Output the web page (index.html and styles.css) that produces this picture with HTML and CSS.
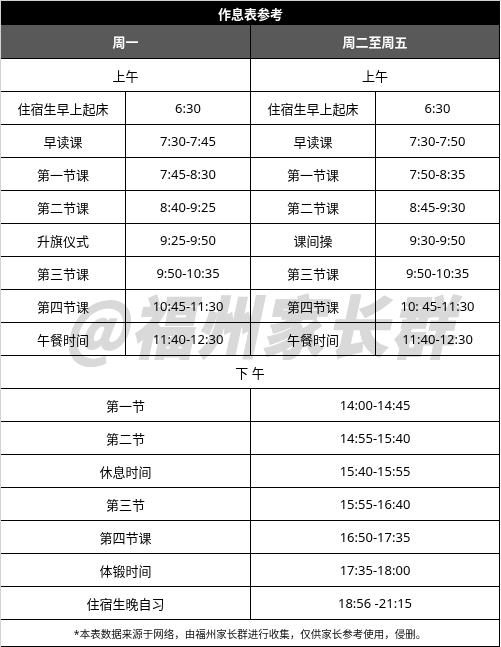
FILE: index.html
```html
<!DOCTYPE html>
<html lang="zh">
<head>
<meta charset="utf-8">
<link rel="stylesheet" href="styles.css">
</head>
<body>
<div class="frame">
  <div class="sheet">
    <div class="title">作息表参考</div>
    <div class="row head two">
      <div class="cell">周一</div>
      <div class="cell">周二至周五</div>
    </div>
    <div class="row two">
      <div class="cell">上午</div>
      <div class="cell">上午</div>
    </div>
    <div class="row four"><div class="cell">住宿生早上起床</div><div class="cell">6:30</div><div class="cell">住宿生早上起床</div><div class="cell">6:30</div></div>
    <div class="row four"><div class="cell">早读课</div><div class="cell">7:30-7:45</div><div class="cell">早读课</div><div class="cell">7:30-7:50</div></div>
    <div class="row four"><div class="cell">第一节课</div><div class="cell">7:45-8:30</div><div class="cell">第一节课</div><div class="cell">7:50-8:35</div></div>
    <div class="row four"><div class="cell">第二节课</div><div class="cell">8:40-9:25</div><div class="cell">第二节课</div><div class="cell">8:45-9:30</div></div>
    <div class="row four"><div class="cell">升旗仪式</div><div class="cell">9:25-9:50</div><div class="cell">课间操</div><div class="cell">9:30-9:50</div></div>
    <div class="row four"><div class="cell">第三节课</div><div class="cell">9:50-10:35</div><div class="cell">第三节课</div><div class="cell">9:50-10:35</div></div>
    <div class="row four"><div class="cell">第四节课</div><div class="cell">10:45-11:30</div><div class="cell">第四节课</div><div class="cell">10: 45-11:30</div></div>
    <div class="row four"><div class="cell">午餐时间</div><div class="cell">11:40-12:30</div><div class="cell">午餐时间</div><div class="cell">11:40-12:30</div></div>
    <div class="row one"><div class="cell">下 午</div></div>
    <div class="row two"><div class="cell">第一节</div><div class="cell">14:00-14:45</div></div>
    <div class="row two"><div class="cell">第二节</div><div class="cell">14:55-15:40</div></div>
    <div class="row two"><div class="cell">休息时间</div><div class="cell">15:40-15:55</div></div>
    <div class="row two"><div class="cell">第三节</div><div class="cell">15:55-16:40</div></div>
    <div class="row two"><div class="cell">第四节课</div><div class="cell">16:50-17:35</div></div>
    <div class="row two"><div class="cell">体锻时间</div><div class="cell">17:35-18:00</div></div>
    <div class="row two"><div class="cell">住宿生晚自习</div><div class="cell">18:56 -21:15</div></div>
    <div class="foot">*本表数据来源于网络，由福州家长群进行收集，仅供家长参考使用，侵删。</div>
    <div class="watermark">@福州家长群</div>
  </div>
</div>
</body>
</html>
```

FILE: styles.css
```css
* { box-sizing: border-box; }
html, body { margin: 0; padding: 0; background: #fff; }
body {
  font-family: "Noto Sans", "Noto Sans CJK SC", sans-serif;
  font-size: 13px;
  color: #000;
}
.frame {
  width: 501px;
  height: 647px;
  border-top: 1px solid #d2d2d2;
  border-left: 1px solid #d2d2d2;
}
.sheet {
  position: relative;
  width: 499px;
  border-bottom: 1px solid #000;
}
.title {
  height: 24px;
  background: #000;
  color: #fff;
  font-weight: bold;
  display: flex;
  align-items: center;
  justify-content: center;
  font-family: "Noto Sans CJK SC", sans-serif;
}
.row {
  display: grid;
  height: 33px;
  border-bottom: 1px solid #000;
}
.row.head {
  height: 34px;
  background: #595959;
  color: #fff;
  font-weight: bold;
}
.row.one { grid-template-columns: 499px; }
.row.two { grid-template-columns: 250px 249px; }
.row.four { grid-template-columns: 125px 125px 125px 124px; }
.cell {
  display: flex;
  align-items: center;
  justify-content: center;
  border-right: 1px solid #000;
  white-space: nowrap;
  position: relative;
  z-index: 1;
}
.foot {
  height: 26px;
  border-right: 1px solid #000;
  display: flex;
  align-items: center;
  justify-content: center;
  font-size: 10.5px;
  color: #111;
}
.watermark {
  position: absolute;
  left: 76px;
  top: 288px;
  font-family: "Noto Sans CJK SC", sans-serif;
  font-weight: 900;
  font-size: 62px;
  line-height: 1;
  letter-spacing: 3px;
  color: #d9d9d9;
  -webkit-text-stroke: 1px #d9d9d9;
  transform: skewX(-12deg) scaleY(1.1);
  transform-origin: left top;
  mix-blend-mode: multiply;
  z-index: 2;
  pointer-events: none;
  white-space: nowrap;
}
```
